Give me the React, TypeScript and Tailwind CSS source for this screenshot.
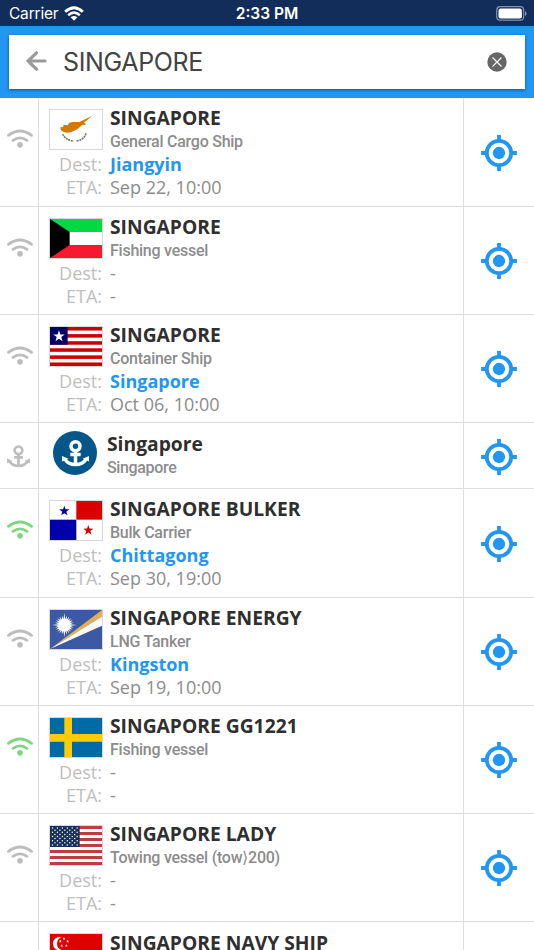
import React from "react";

type Flag = "cy" | "kw" | "lr" | "pa" | "mh" | "se" | "us" | "sg";

interface Vessel {
  name: string;
  kind: string;
  flag: Flag;
  dest?: string;
  eta?: string;
  live?: boolean;
  height: string;
}

const star = (cx: number, cy: number, r: number) =>
  Array.from({ length: 10 }, (_, i) => {
    const a = -Math.PI / 2 + (i * Math.PI) / 5;
    const d = i % 2 ? r * 0.4 : r;
    return `${cx + d * Math.cos(a)},${cy + d * Math.sin(a)}`;
  }).join(" ");

const sunburst = Array.from({ length: 48 }, (_, i) => {
  const a = (i * Math.PI) / 24;
  const d = i % 2 ? 18 : i % 12 === 0 ? 37 : 29;
  return `${43 + d * Math.cos(a)},${45 + d * Math.sin(a)}`;
}).join(" ");

function FlagArt({ flag }: { flag: Flag }) {
  switch (flag) {
    case "cy":
      return (
        <>
          <path d="M31 51l8 1 2-8 12 2 5-8 10-2 20 0 14-7 24-11-15 13-9 6 6 7-12 1-10 10-13 7-9 4-13 2-10-2-8-5z" fill="#d57800" />
          <path d="M38 72q9 19 33 21M108 70q-6 20-30 23" fill="none" stroke="#77805a" strokeWidth="5" strokeDasharray="6 2" />
        </>
      );
    case "kw":
      return (
        <>
          <path d="M0 0h156v39H0z" fill="#00d942" />
          <path d="M0 78h156v39H0z" fill="#f71930" />
          <path d="M0 0l59 39v39L0 117z" fill="#000" />
        </>
      );
    case "lr":
      return (
        <>
          {[0, 1, 2, 3, 4, 5].map((i) => (
            <rect key={i} y={i * 21.27} width="156" height="10.64" fill="#cc0000" />
          ))}
          <rect width="53" height="53" fill="#000066" />
          <polygon points={star(27, 28, 18)} fill="#fff" />
        </>
      );
    case "pa":
      return (
        <>
          <path d="M79 0h77v56H79z" fill="#db0000" />
          <path d="M0 56h79v61H0z" fill="#0000ab" />
          <polygon points={star(43, 30, 16)} fill="#0000ab" />
          <polygon points={star(115, 88, 16)} fill="#db0000" />
        </>
      );
    case "mh":
      return (
        <>
          <path d="M0 0h156v117H0z" fill="#3b5aa3" />
          <path d="M0 117L156 0v22z" fill="#e2ae57" />
          <path d="M0 117L156 20v27z" fill="#fff" />
          <polygon points={sunburst} fill="#fff" />
        </>
      );
    case "se":
      return (
        <>
          <path d="M0 0h156v117H0z" fill="#006aa7" />
          <path d="M43 0h23v117H43zM0 48h156v23H0z" fill="#fecc00" />
        </>
      );
    case "us":
      return (
        <>
          {[0, 1, 2, 3, 4, 5, 6].map((i) => (
            <rect key={i} y={i * 18} width="156" height="9" fill="#bd3d44" />
          ))}
          <rect width="89" height="63" fill="#192f5d" />
          {Array.from({ length: 9 }, (_, r) =>
            Array.from({ length: r % 2 ? 5 : 6 }, (_, c) => (
              <circle key={`${r}-${c}`} cx={7.5 + c * 14.8 + (r % 2 ? 7.4 : 0)} cy={6.3 + r * 6.3} r="2.2" fill="#fff" />
            )),
          )}
        </>
      );
    case "sg":
      return (
        <>
          <path d="M0 0h156v58H0z" fill="#df0000" />
          <path d="M35 10a20 20 0 1 0 0 38a20 20 0 0 1 0-38z" fill="#fff" />
          {[[42, 14], [31, 22], [53, 22], [35, 35], [49, 35]].map(([x, y]) => (
            <polygon key={`${x}-${y}`} points={star(x, y, 5)} fill="#fff" />
          ))}
        </>
      );
  }
}

function Signal({ className }: { className: string }) {
  return (
    <svg viewBox="0 0 78 56" className={className} fill="none" stroke="currentColor">
      <path d="M4.5 18.5Q39-7.500 73.500 18.500" strokeWidth="8.500" strokeLinecap="round" />
      <path d="M18 33.500Q39 18.500 60 33.500" strokeWidth="8.500" strokeLinecap="round" />
      <circle cx="39" cy="47" r="8.500" fill="currentColor" stroke="none" />
    </svg>
  );
}

function Target() {
  return (
    <svg viewBox="0 0 24 24" className="size-[38px] text-[#2196f3]" fill="currentColor">
      <circle cx="12" cy="12" r="7.700" fill="none" stroke="currentColor" strokeWidth="2.400" />
      <circle cx="12" cy="12" r="3.900" />
      <path d="M10.800 .700h2.400v3.700h-2.400zM10.800 19.600h2.400v3.700h-2.400zM.700 10.800h3.700v2.400H.700zM19.600 10.800h3.700v2.400h-3.700z" />
    </svg>
  );
}

function Anchor({ className, weight }: { className: string; weight: number }) {
  return (
    <svg viewBox="0 0 78 78" className={className} fill="none" stroke="currentColor" strokeWidth={weight}>
      <circle cx="39" cy="18" r="13" />
      <path d="M39 32v37M24 42h30" />
      <path d="M9 56q9 15 30 15t30-15" />
      <path d="M0 62V46l19 8zM78 62V46l-19 8z" fill="currentColor" stroke="none" />
    </svg>
  );
}

const vessels: Vessel[] = [
  { name: "SINGAPORE", kind: "General Cargo Ship", flag: "cy", dest: "Jiangyin", eta: "Sep 22, 10:00", height: "h-[109px]" },
  { name: "SINGAPORE", kind: "Fishing vessel", flag: "kw", height: "h-[108px]" },
  { name: "SINGAPORE", kind: "Container Ship", flag: "lr", dest: "Singapore", eta: "Oct 06, 10:00", height: "h-[108px]" },
  { name: "SINGAPORE BULKER", kind: "Bulk Carrier", flag: "pa", dest: "Chittagong", eta: "Sep 30, 19:00", live: true, height: "h-[109px]" },
  { name: "SINGAPORE ENERGY", kind: "LNG Tanker", flag: "mh", dest: "Kingston", eta: "Sep 19, 10:00", height: "h-[108px]" },
  { name: "SINGAPORE GG1221", kind: "Fishing vessel", flag: "se", live: true, height: "h-[108px]" },
  { name: "SINGAPORE LADY", kind: "Towing vessel (tow⟩200)", flag: "us", height: "h-[108px]" },
];

function FlagImage({ flag }: { flag: Flag }) {
  return (
    <svg viewBox="0 0 156 117" preserveAspectRatio="none" className="mt-[2px] h-[41px] w-[54px] border border-[#d8d8d8]">
      <FlagArt flag={flag} />
    </svg>
  );
}

function VesselRow({ v }: { v: Vessel }) {
  return (
    <li className={`flex shrink-0 border-b border-[#dedede] ${v.height}`}>
      <div className="flex w-[39px] justify-center border-r border-[#dedede] pt-[30.500px]">
        <Signal className={`ml-px h-[19px] w-[26px] ${v.live ? "text-[#7fd67f]" : "text-[#bdbdbd]"}`} />
      </div>
      <div className="flex-1 pl-[10px] pt-[9px]">
        <div className="flex gap-[7px]">
          <FlagImage flag={v.flag} />
          <div className="whitespace-nowrap">
            <p className="text-[19.250px] font-bold leading-[22px] text-[#2f2f2f]">{v.name}</p>
            <p className="h-[24px] pt-px font-['Roboto',sans-serif] text-[16px] font-medium leading-[23.500px] tracking-[-0.250px] text-[#8c8c8c]">{v.kind}</p>
          </div>
        </div>
        <dl className="grid grid-cols-[53px_1fr] gap-x-[8px] text-[18px] leading-[23px]">
          <dt className="text-right text-[#bebebe]">Dest:</dt>
          <dd className={v.dest ? "font-bold text-[#2196f3]" : "text-[#8c8c8c]"}>{v.dest ?? "-"}</dd>
          <dt className="text-right text-[#bebebe]">ETA:</dt>
          <dd className="text-[#8c8c8c]">{v.eta ?? "-"}</dd>
        </dl>
      </div>
      <div className="flex w-[71px] items-center justify-center border-l border-[#dedede] pt-px">
        <Target />
      </div>
    </li>
  );
}

function PortRow() {
  return (
    <li className="flex h-[66px] shrink-0 border-b border-[#dedede]">
      <div className="flex w-[39px] justify-center border-r border-[#dedede] pr-px pt-[22px]">
        <Anchor weight={9} className="size-[23px] text-[#bdbdbd]" />
      </div>
      <div className="flex flex-1 gap-[10px] pl-[14px] pt-2">
        <div className="flex size-[44px] items-center justify-center rounded-full bg-[#045788] text-white">
          <Anchor weight={10} className="size-[27px]" />
        </div>
        <div>
          <p className="text-[19.250px] font-bold leading-[25px] text-[#2f2f2f]">Singapore</p>
          <p className="font-['Roboto',sans-serif] text-[16px] font-medium leading-[23px] tracking-[-0.350px] text-[#8c8c8c]">Singapore</p>
        </div>
      </div>
      <div className="flex w-[71px] items-center justify-center border-l border-[#dedede] pt-[3px]">
        <Target />
      </div>
    </li>
  );
}

export default function App() {
  return (
    <div className="flex h-[950px] w-[534px] flex-col overflow-hidden bg-white font-['Open_Sans',sans-serif]">
      <div className="grid h-[26px] shrink-0 grid-cols-3 items-center bg-[#122d59] font-['Inter',sans-serif] text-[15.500px] text-white">
        <div className="flex items-center gap-[6px] pl-[9px] pt-[2px]">
          <span className="tracking-[-0.200px]">Carrier</span>
          <svg viewBox="0 0 58 44" className="mb-[2px] h-[15px] w-[20px]" fill="none" stroke="#fff" strokeWidth="8">
            <path d="M3 17Q29-7 55 17M12 27Q29 12 46 27" />
            <path d="M19 33q10-8 20 0L29 43z" fill="#fff" stroke="none" />
          </svg>
        </div>
        <span className="pt-[2px] text-center font-semibold">2:33 PM</span>
        <svg viewBox="0 0 31 15" className="mr-[7px] h-[15px] w-[31px] justify-self-end">
          <rect x=".7" y=".7" width="27" height="13.500" rx="3.500" fill="none" stroke="#8292ae" strokeWidth="1.200" />
          <rect x="2.500" y="2.500" width="23.400" height="10" rx="2" fill="#fff" />
          <path d="M29 5q1.700 1 1.700 2.500T29 10z" fill="#8292ae" />
        </svg>
      </div>
      <header className="h-[72px] shrink-0 bg-[#2196f3] px-[9px] pt-[9px]">
        <div className="flex h-[54px] items-center bg-white px-[17px] shadow-[0_1px_3px_rgba(0,0,0,0.45)]">
          <svg viewBox="0 0 21 20" className="mb-[3px] h-[20px] w-[21px]" fill="none" stroke="#9a9a9a" strokeWidth="3.200" strokeLinecap="round">
            <path d="M19 10H2.500M10.500 1.800L2 10l8.500 8.200" />
          </svg>
          <span className="ml-[16px] flex-1 pt-[2px] font-['Inter',sans-serif] text-[25px] tracking-[-0.350px] text-[#444]">SINGAPORE</span>
          <svg viewBox="0 0 20 20" className="mr-px h-[20px] w-[20px]">
            <circle cx="10" cy="10" r="9.700" fill="#666" />
            <path d="M5.500 5.500l9 9M14.500 5.500l-9 9" stroke="#fff" strokeWidth="1.100" />
          </svg>
        </div>
      </header>
      <ul className="flex flex-col">
        {vessels.slice(0, 3).map((v) => (
          <VesselRow key={v.kind} v={v} />
        ))}
        <PortRow />
        {vessels.slice(3).map((v) => (
          <VesselRow key={v.name} v={v} />
        ))}
        <li className="flex h-[28px] shrink-0">
          <div className="w-[39px] border-r border-[#dedede]" />
          <div className="flex flex-1 gap-[7px] pl-[10px] pt-[9px]">
            <FlagImage flag="sg" />
            <p className="whitespace-nowrap text-[19.250px] font-bold leading-[23px] text-[#2f2f2f]">SINGAPORE NAVY SHIP</p>
          </div>
          <div className="w-[71px] border-l border-[#dedede]" />
        </li>
      </ul>
    </div>
  );
}
